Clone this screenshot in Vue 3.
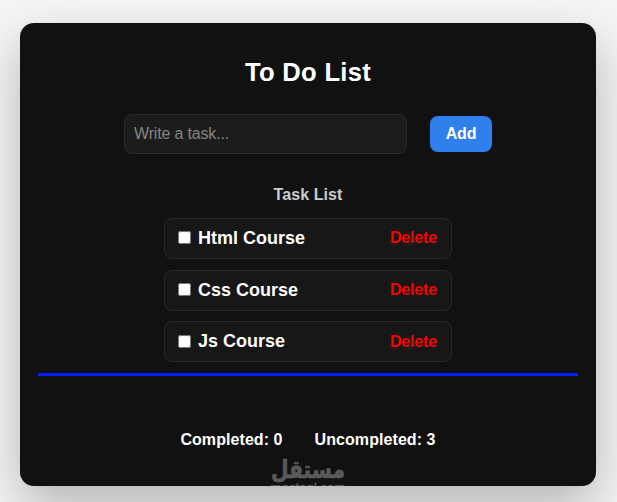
<script setup>
import { computed, ref } from 'vue'

const draft = ref('')
const tasks = ref([
  { id: 1, name: 'Html Course', done: false },
  { id: 2, name: 'Css Course', done: false },
  { id: 3, name: 'Js Course', done: false },
])
const completed = computed(() => tasks.value.filter((t) => t.done).length)
const uncompleted = computed(() => tasks.value.length - completed.value)

function addTask() {
  const name = draft.value.trim()
  if (!name) return
  tasks.value.push({ id: Date.now(), name, done: false })
  draft.value = ''
}
function removeTask(id) {
  tasks.value = tasks.value.filter((t) => t.id !== id)
}
</script>

<template>
  <div class="page">
    <main class="card">
      <h1 class="title">To Do List</h1>
      <form class="entry" @submit.prevent="addTask">
        <input v-model="draft" class="field" type="text" placeholder="Write a task..." />
        <button class="add" type="submit">Add</button>
      </form>
      <h2 class="subtitle">Task List</h2>
      <ul class="tasks">
        <li v-for="task in tasks" :key="task.id" class="task">
          <input v-model="task.done" class="check" type="checkbox" />
          <span class="name">{{ task.name }}</span>
          <button class="delete" type="button" @click="removeTask(task.id)">Delete</button>
        </li>
      </ul>
      <hr class="rule" />
      <div class="totals">
        <span>Completed: {{ completed }}</span>
        <span>Uncompleted: {{ uncompleted }}</span>
      </div>
      <svg class="mark" width="80" height="36" viewBox="0 0 80 36">
        <text class="mark-ar" x="40" y="20.5" text-anchor="middle" textLength="74" lengthAdjust="spacingAndGlyphs">مستقل</text>
        <text class="mark-en" x="2.5" y="34" textLength="75" lengthAdjust="spacingAndGlyphs">mostaql.com</text>
      </svg>
    </main>
  </div>
</template>

<style>
body {
  margin: 0;
  overflow: hidden;
}
</style>

<style scoped>
.page {
  box-sizing: border-box;
  height: 502px;
  padding: 23px 21px 16px 20px;
  overflow: hidden;
  background: #f4f5f7;
  font-family: "Liberation Sans", Arial, sans-serif;
}
.card {
  position: relative;
  box-sizing: border-box;
  height: 463px;
  padding: 34px 18px 0;
  overflow: hidden;
  border-radius: 14px;
  background: #111;
  box-shadow: 0 20px 50px rgba(0, 0, 0, 0.27);
  color: #fff;
}
.title {
  margin: 0;
  font-size: 25.6px;
  line-height: 30px;
  letter-spacing: 0.3px;
  text-align: center;
}
.entry {
  display: flex;
  justify-content: center;
  align-items: center;
  gap: 23px;
  margin-top: 27px;
}
.field {
  box-sizing: border-box;
  width: 283px;
  height: 40px;
  padding: 0 9px;
  border: 1px solid #2a2a2a;
  border-radius: 8px;
  outline: none;
  background: #1c1c1c;
  color: #fff;
  font: 16px "Liberation Sans", Arial, sans-serif;
  letter-spacing: -0.17px;
}
.field::placeholder {
  color: #858585;
}
.add {
  width: 62px;
  height: 36px;
  padding: 0;
  border: 0;
  border-radius: 8px;
  background: #2f80ed;
  color: #fff;
  font: bold 16px "Liberation Sans", Arial, sans-serif;
  letter-spacing: -0.2px;
}
.subtitle {
  margin: 31px 0 0;
  color: #ccc;
  font-size: 16px;
  line-height: 19px;
  letter-spacing: 0.1px;
  text-align: center;
}
.tasks {
  display: flex;
  flex-direction: column;
  gap: 10.6px;
  width: 288px;
  margin: 14px auto 0;
  padding: 0;
  list-style: none;
}
.task {
  display: flex;
  align-items: center;
  box-sizing: border-box;
  height: 41px;
  padding: 0 14px 0.6px 13px;
  border: 1px solid #2a2a2a;
  border-radius: 8px;
  background: #171717;
}
.check {
  width: 13px;
  height: 13px;
  margin: 0 7px 0.6px 0;
}
.name {
  flex: 1;
  font-size: 18px;
  font-weight: bold;
  line-height: 20px;
}
.delete {
  margin-top: 0.5px;
  padding: 0;
  border: 0;
  background: none;
  color: #fa0000;
  font: bold 16px "Liberation Sans", Arial, sans-serif;
  letter-spacing: -0.17px;
}
.rule {
  height: 3px;
  margin: 10.8px 0 0;
  border: 0;
  background: #001eff;
}
.totals {
  display: flex;
  justify-content: center;
  gap: 32px;
  margin-top: 55px;
  font-size: 16px;
  font-weight: bold;
  line-height: 18px;
  letter-spacing: 0.07px;
}
.mark {
  position: absolute;
  left: 248px;
  top: 434px;
  fill: #5a5a5a;
  pointer-events: none;
}
.mark-ar {
  font: bold 25px "DejaVu Sans", sans-serif;
  stroke: #5a5a5a;
  stroke-width: 0.7px;
  stroke-linejoin: round;
}
.mark-en {
  font: 500 11.5px "Liberation Sans", sans-serif;
  stroke: #5a5a5a;
  stroke-width: 0.3px;
}
</style>
